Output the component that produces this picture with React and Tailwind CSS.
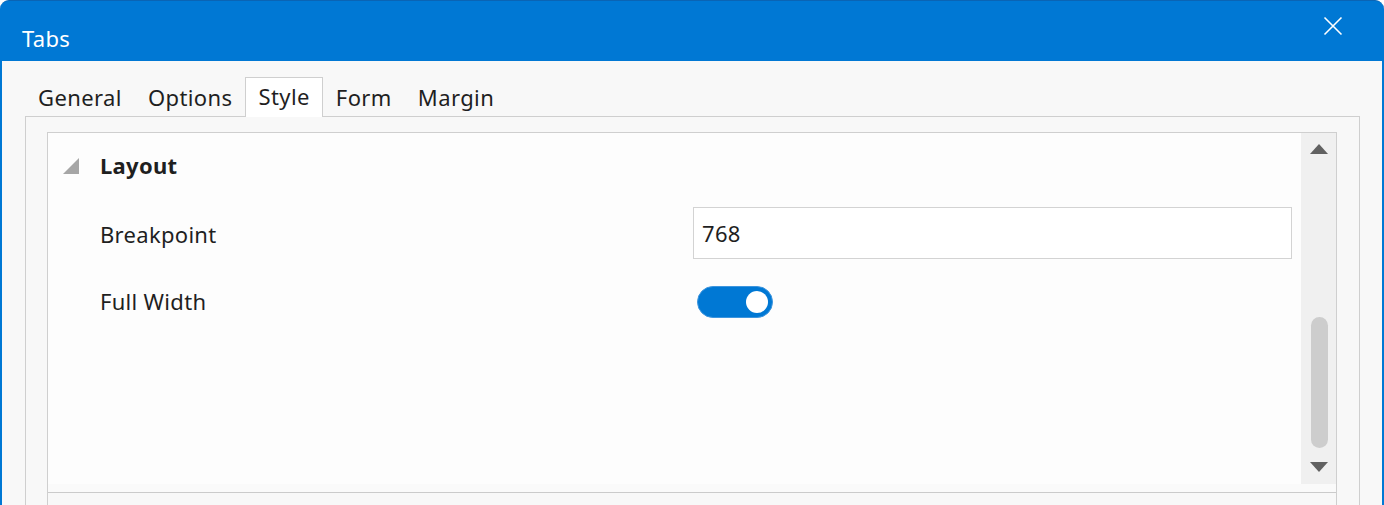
import React from "react";

const font = { fontFamily: '"Noto Sans", "Open Sans", sans-serif' };

function Tab({ label, active }) {
  if (active) {
    return (
      <div className="h-[40px] px-[12px] pb-[2px] bg-white border border-b-0 border-[#cfcfcf] flex items-center text-[22px] tracking-[0.4px] text-[#1f1f1f] -mb-px relative z-10">
        {label}
      </div>
    );
  }
  return (
    <div className="h-[37px] px-[13px] flex items-center text-[22px] tracking-[0.4px] text-[#1f1f1f]">
      {label}
    </div>
  );
}

export default function App() {
  return (
    <div className="w-[1384px] h-[505px] overflow-hidden bg-white tracking-[0.3px]" style={font}>
      <div className="h-[505px] bg-[#0078d4] rounded-t-[9px] border-t border-[#0a64b4] px-[2px] flex flex-col">
        <div className="h-[60px] flex items-start justify-between pl-[20px] pr-[40px] text-white shrink-0">
          <span className="text-[22px] leading-none pt-[26px]">Tabs</span>
          <svg width="20" height="20" viewBox="0 0 20 20" className="mt-[15px] mr-[-1px]">
            <path d="M1.5 1.5 L18.5 18.5 M18.5 1.5 L1.5 18.5" stroke="white" strokeWidth="1.6" fill="none" />
          </svg>
        </div>
        <div className="flex-1 bg-[#f8f8f8] pl-[23px] pr-[22px] pt-[16px] flex flex-col">
          <div className="flex items-end h-[39px] shrink-0">
            <Tab label="General" />
            <Tab label="Options" />
            <Tab label="Style" active />
            <Tab label="Form" />
            <Tab label="Margin" />
          </div>
          <div className="flex-1 border border-b-0 border-[#cfcfcf] pt-[15px] pl-[21px] pr-[22px] flex flex-col">
            <div className="flex-1 border border-b-0 border-[#cfcfcf] flex flex-col">
              <div className="h-[351px] flex shrink-0 bg-[#fdfdfd]">
                <div className="flex-1 flex flex-col">
                  <div className="h-[68px] flex items-center">
                    <div className="w-[52px] flex justify-end pr-[21px]">
                      <svg width="16" height="16" viewBox="0 0 16 16" className="mt-[-2px]">
                        <path d="M16 0 L16 16 L0 16 Z" fill="#a6a6a6" />
                      </svg>
                    </div>
                    <span className="text-[22px] font-bold text-[#1f1f1f] mt-[-4px]">Layout</span>
                  </div>
                  <div className="h-[68px] flex items-center">
                    <span className="w-[645px] pl-[52px] text-[22px] text-[#1f1f1f] mt-[-2px]">Breakpoint</span>
                    <div className="w-[599px] h-[52px] border border-[#d3d3d3] bg-white flex items-center pl-[8px] text-[22px] text-[#1f1f1f] mt-[-4px]">
                      768
                    </div>
                  </div>
                  <div className="h-[68px] flex items-center">
                    <span className="w-[649px] pl-[52px] text-[22px] text-[#1f1f1f] mt-[-4px]">Full Width</span>
                    <div className="w-[76px] h-[32px] rounded-full bg-[#0078d4] border border-[#3d95de] flex items-center justify-end pr-[4px] mt-[-3px]">
                      <div className="w-[22px] h-[22px] rounded-full bg-white" />
                    </div>
                  </div>
                </div>
                <div className="w-[35px] bg-[#f0f0f0] flex flex-col items-center">
                  <svg width="18" height="10" viewBox="0 0 18 10" className="mt-[11px] ml-[1px]">
                    <path d="M9 0 L18 10 L0 10 Z" fill="#616161" />
                  </svg>
                  <div className="w-[17px] h-[131px] rounded-full bg-[#cdcdcd] mt-[163px] ml-[1px]" />
                  <svg width="18" height="10" viewBox="0 0 18 10" className="mt-[14px] ml-[1px]">
                    <path d="M0 0 L18 0 L9 10 Z" fill="#616161" />
                  </svg>
                </div>
              </div>
              <div className="h-[8px] bg-[#fafafa] shrink-0" />
              <div className="h-px bg-[#cbcbcb] shrink-0" />
              <div className="flex-1 bg-[#f8f8f8]" />
            </div>
          </div>
        </div>
      </div>
    </div>
  );
}
